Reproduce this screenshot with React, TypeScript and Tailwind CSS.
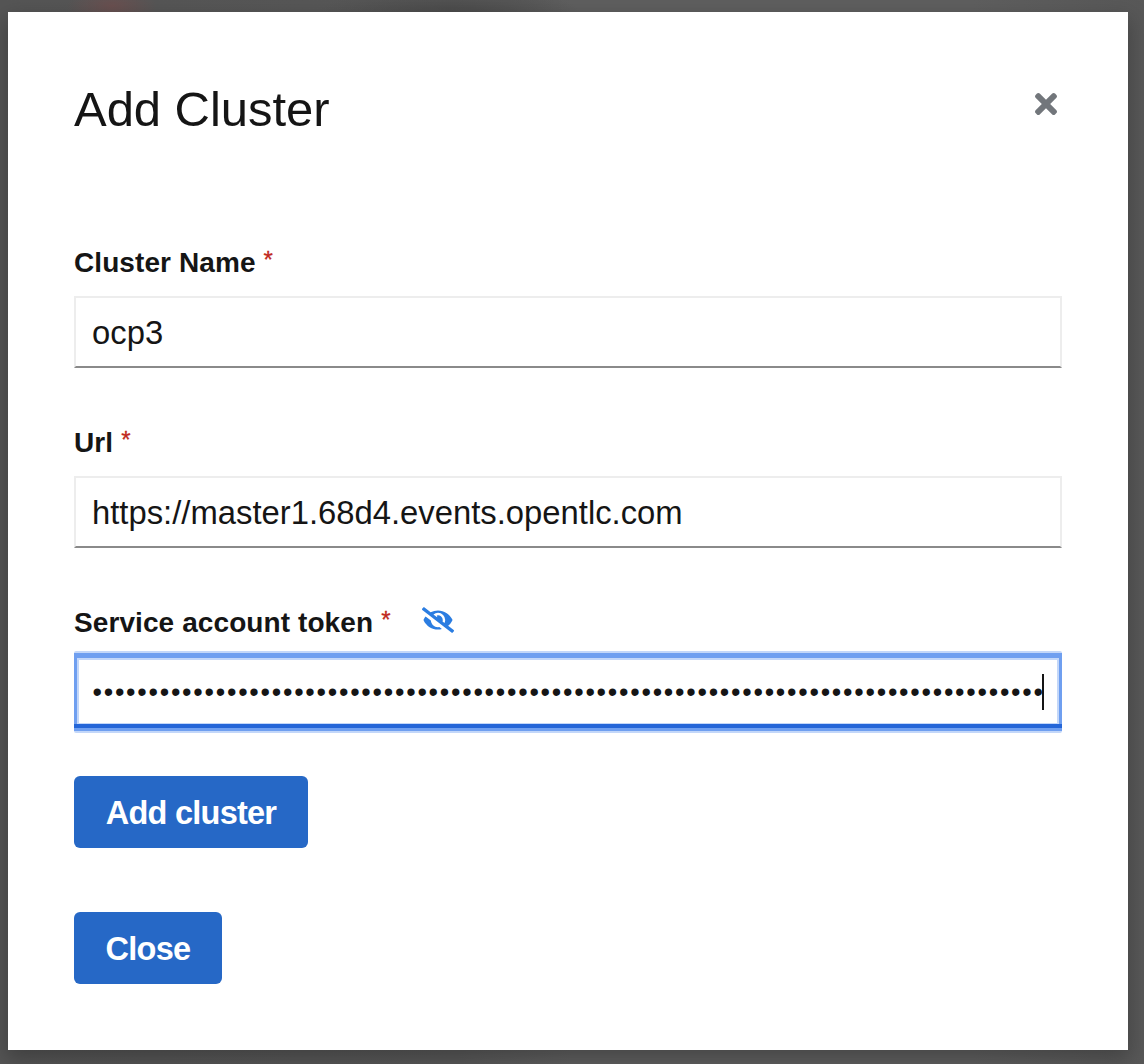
import { FaTimes, FaEyeSlash } from "react-icons/fa";

const TOKEN_LENGTH = 85;

function Label({ text }: { text: string }) {
  return (
    <label className="flex h-[42px] items-center pt-[1px] text-[28px] font-bold whitespace-nowrap">
      <span className="tracking-[0.09px]">{text}</span>
      <span className="mb-[5px] ml-2 text-[24px] font-normal text-[#c0281c] [-webkit-text-stroke:0.3px_#c0281c]">*</span>
    </label>
  );
}

function TextField({ value }: { value: string }) {
  return (
    <div className="mt-[13px] flex h-[72px] items-center border-2 border-[#ededed] border-b-[#8a8a8a] px-4 pt-[1px] text-[32.8px] whitespace-nowrap">
      <span>{value}</span>
    </div>
  );
}

function Button({ text, size }: { text: string; size: string }) {
  return (
    <button className={`${size} flex h-[72px] items-center justify-center rounded-[6px] bg-[#2668c6] pt-[2px] text-[32.5px] font-bold tracking-[-0.75px] whitespace-nowrap text-white`}>
      {text}
    </button>
  );
}

export default function App() {
  return (
    <div className="h-[1064px] w-[1144px] overflow-hidden bg-[#5a5a5a] bg-[radial-gradient(ellipse_45px_24px_at_112px_6px,#6a5050,transparent),radial-gradient(ellipse_130px_24px_at_450px_12px,#4c4c4c,transparent),linear-gradient(to_right,#555555_0%,#585858_40%,#5f5f5f_50%,#5f5f5f_85%,#585858_100%)] pt-3 pl-2 font-['Liberation_Sans',Arial,sans-serif] text-[#151515]">
      <main className="h-[1038px] w-[1120px] bg-white px-[66px] shadow-[0_8px_20px_2px_rgba(0,0,0,0.25)]">
        <header className="flex h-[229px] items-start justify-between pt-[69px]">
          <h1 className="text-[49px] leading-[56px] tracking-[-0.05px] whitespace-nowrap">Add Cluster</h1>
          <button aria-label="Close dialog" className="mt-[7px] mr-[5px] text-[#72767b]">
            <FaTimes className="h-8 w-[22px]" />
          </button>
        </header>
        <Label text="Cluster Name" />
        <TextField value="ocp3" />
        <div className="h-[53px]" />
        <Label text="Url" />
        <TextField value="https://master1.68d4.events.opentlc.com" />
        <div className="h-[53px]" />
        <div className="flex items-center">
          <Label text="Service account token" />
          <FaEyeSlash className="mb-[5px] ml-8 h-[26px] w-8 text-[#2b7de1]" />
        </div>
        <div className="mt-[8px] h-[82px] rounded-[2px] border-y-2 border-[#c3d7f9]">
          <div className="h-[71px] border-x-[3px] border-t-[5px] border-[#6f9ff0]">
            <div className="flex h-[66px] items-center border-2 border-b border-[#c3d7f9] pl-[13.5px] text-[27px]">
              <span className="pt-[2px] tracking-[1.75px]">{"•".repeat(TOKEN_LENGTH)}</span>
              <span className="-ml-[2.5px] h-9 w-[2px] shrink-0 bg-[#151515]" />
            </div>
          </div>
          <div className="h-[7px] border-t-4 border-[#2466d8] bg-[#6f9ff0]" />
        </div>
        <div className="mt-[43px] flex flex-col gap-16">
          <Button text="Add cluster" size="w-[234px]" />
          <Button text="Close" size="w-[148px]" />
        </div>
      </main>
    </div>
  );
}
